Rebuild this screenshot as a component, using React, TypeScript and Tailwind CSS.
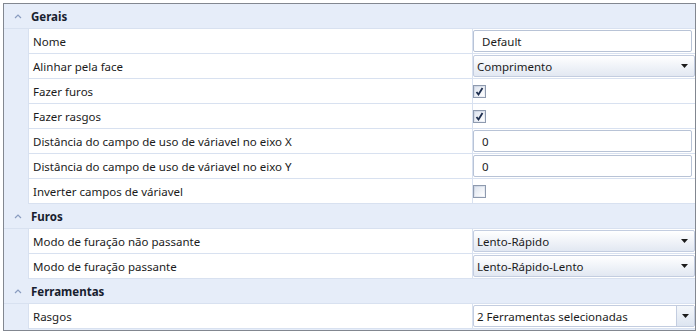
// @ts-nocheck
import React from 'react';

// grade de propriedades estilo WPF
const FONT = { fontFamily: '"Noto Sans", "Open Sans", sans-serif' };

function Arrow() {
  return (
    <svg width="7" height="4" viewBox="0 0 7 4">
      <path d="M0 0 H7 L3.5 4 Z" fill="#1b1b1b" />
    </svg>
  );
}

function Chevron() {
  return (
    <svg width="8" height="5" viewBox="0 0 8 5">
      <path d="M1 4 L4 1 L7 4" fill="none" stroke="#8a9cc0" strokeWidth="1.2" />
    </svg>
  );
}

function TextBox({ value }: any) {
  return (
    <div className="flex items-center h-[22px] w-full mr-[3px] bg-white border border-[#b8c3d6] rounded-[2px] pl-[8px] pt-[1px]">
      {value}
    </div>
  );
}

function Combo({ value }: any) {
  return (
    <div className="flex items-center justify-between h-[22px] w-full bg-gradient-to-b from-white to-[#e2e8f2] border border-[#c3cde0] rounded-[2px] pl-[3px] pr-[6px]">
      <span className="pt-[1px]">{value}</span>
      <Arrow />
    </div>
  );
}

function EditCombo({ value }: any) {
  return (
    <div className="flex items-stretch h-[22px] w-full bg-white border border-[#c3cde0] rounded-[2px]">
      <div className="flex-1 flex items-center pl-[3px] pt-[1px]">{value}</div>
      <div className="w-[18px] flex items-center justify-center border-l border-[#c3cde0] bg-gradient-to-b from-[#f4f7fb] to-[#dde5f1]">
        <Arrow />
      </div>
    </div>
  );
}

function Check({ checked }: any) {
  return (
    <div className="w-[13px] h-[13px] border border-[#8e9aae] bg-gradient-to-br from-[#c9d2e2] to-[#f4f6fa] p-[1px]">
      <div className="w-full h-full bg-gradient-to-br from-[#dfe5ef] to-white flex items-center justify-center">
        {checked && (
          <svg width="9" height="9" viewBox="0 0 9 9">
            <path d="M1.5 5 L3.5 7.5 L7.5 1" fill="none" stroke="#1f2f4f" strokeWidth="1.8" />
          </svg>
        )}
      </div>
    </div>
  );
}

function Header({ title }: any) {
  return (
    <div className="flex items-center h-[25px] bg-[#e6edf9] border-b border-[#d8e1f0]">
      <div className="w-[24px] flex justify-center pl-[4px]">
        <Chevron />
      </div>
      <span className="font-bold text-[#17202e] pl-[3px] pt-[2px]">{title}</span>
    </div>
  );
}

function Row({ label, children }: any) {
  return (
    <div className="flex h-[25px] bg-[#e6edf9]">
      <div className="w-[24px]" />
      <div className="flex flex-1 bg-white border-b border-l border-[#d8e1f0]">
        <div className="w-[444px] flex items-center pl-[4px] pt-[2px] border-r border-[#d8e1f0]">{label}</div>
        <div className="flex-1 flex items-center">{children}</div>
      </div>
    </div>
  );
}

export default function App() {
  return (
    <div className="w-[700px] h-[336px] bg-white pt-[3px] pl-[3px] text-[11.5px] text-[#1b1b1b]" style={FONT}>
      <div className="w-[693px] h-[328px] border border-[#828790] bg-[#e6edf9] overflow-hidden">
        <Header title="Gerais" />
        <Row label="Nome"><TextBox value="Default" /></Row>
        <Row label="Alinhar pela face"><Combo value="Comprimento" /></Row>
        <Row label="Fazer furos"><Check checked /></Row>
        <Row label="Fazer rasgos"><Check checked /></Row>
        <Row label="Distância do campo de uso de váriavel no eixo X"><TextBox value="0" /></Row>
        <Row label="Distância do campo de uso de váriavel no eixo Y"><TextBox value="0" /></Row>
        <Row label="Inverter campos de váriavel"><Check /></Row>

        <Header title="Furos" />
        <Row label="Modo de furação não passante"><Combo value="Lento-Rápido" /></Row>
        <Row label="Modo de furação passante"><Combo value="Lento-Rápido-Lento" /></Row>

        <Header title="Ferramentas" />
        <Row label="Rasgos"><EditCombo value="2 Ferramentas selecionadas" /></Row>
      </div>
    </div>
  );
}
